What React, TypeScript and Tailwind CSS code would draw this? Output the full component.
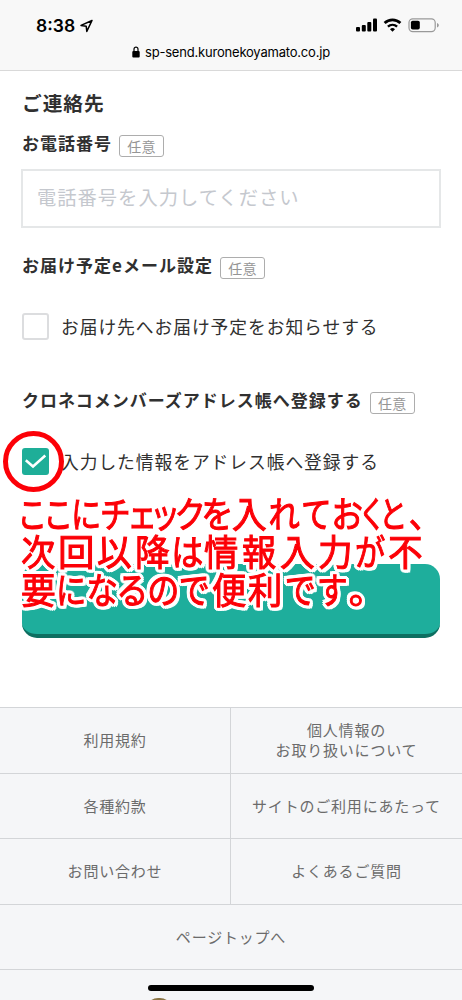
import React from "react";

type Glyph = [char: string, advance: number, stretch: number];

const NOTE_LINES: Glyph[][] = [
  [
    ["こ", 26, 0.82], ["こ", 27, 0.82], ["に", 28.5, 0.83], ["チ", 29.5, 0.84], ["ェ", 23.5, 0.82],
    ["ッ", 23, 0.83], ["ク", 27, 0.86], ["を", 28, 0.88], ["入", 36, 0.95], ["れ", 33.5, 0.86],
    ["て", 30.5, 0.84], ["お", 31.5, 0.87], ["く", 18, 0.75], ["と", 25, 0.78], ["、", 38, 0.9],
  ],
  [
    ["次", 38, 0.94], ["回", 38.5, 1], ["以", 37.5, 0.95], ["降", 37.5, 0.95], ["は", 33, 0.88], ["情", 36, 0.94],
    ["報", 38.5, 0.94], ["入", 39, 0.95], ["力", 36.5, 0.95], ["が", 33, 0.83], ["不", 37.5, 0.95],
  ],
  [
    ["要", 37.5, 0.95], ["に", 29.5, 0.83], ["な", 32, 0.86], ["る", 29, 0.88], ["の", 31.5, 0.88], ["で", 32, 0.85],
    ["便", 37, 0.94], ["利", 36, 0.94], ["で", 33, 0.85], ["す", 31.5, 0.84], ["。", 38, 1],
  ],
];

function NoteLine({ glyphs }: { glyphs: Glyph[] }) {
  return (
    <div className="flex h-[38px]">
      {glyphs.map(([char, advance, stretch], i) => (
        <span key={i} className="flex shrink-0 justify-center" style={{ width: advance }}>
          <span className="block shrink-0" style={{ transform: `scaleX(${stretch})` }}>{char}</span>
        </span>
      ))}
    </div>
  );
}

function StatusIcons() {
  return (
    <svg className="h-[18px] w-[86px]" viewBox="0 0 86 18" fill="none">
      <g fill="#000">
        <rect x="0" y="11" width="4" height="4.6" rx="1" />
        <rect x="5.8" y="9" width="4" height="6.6" rx="1" />
        <rect x="11.3" y="6" width="4" height="9.6" rx="1" />
        <rect x="17" y="2.5" width="4" height="13.1" rx="1" />
      </g>
      <path d="M28.600 7a11.500 11.500 0 0 1 15.800 0" stroke="#000" strokeWidth="2.800" />
      <path d="M31.900 10.600a6.900 6.900 0 0 1 9.200 0" stroke="#000" strokeWidth="2.400" />
      <path d="M36.500 15.800l-2.500-2.600a3.800 3.800 0 0 1 5 0z" fill="#000" />
      <rect x="53" y="2.800" width="26.200" height="12.800" rx="3.800" stroke="#999" strokeWidth="1.200" />
      <rect x="54.900" y="4.800" width="8.900" height="8.800" rx="1.800" fill="#000" />
      <path d="M81 7v4.400c1.300-.4 1.800-1.300 1.800-2.200S82.300 7.400 81 7z" fill="#999" />
    </svg>
  );
}

function Badge() {
  return (
    <span className="ml-[7px] mt-[3px] flex h-[22px] w-[45px] shrink-0 items-center justify-center rounded-[3px] border-[1.5px] border-[#adadad] pb-px text-[14px] leading-none tracking-[0.2px] text-[#959595]">
      任意
    </span>
  );
}

function FieldTitle({ children }: { children: React.ReactNode }) {
  return (
    <div className="flex h-[25px] items-start">
      <h3 className="whitespace-nowrap text-[17px] font-bold leading-[22px] tracking-[1px]">{children}</h3>
      <Badge />
    </div>
  );
}

function FooterCell({ children, divider }: { children: React.ReactNode; divider?: boolean }) {
  return (
    <a
      className={
        divider
          ? "flex h-[65.5px] items-center justify-center whitespace-nowrap border-b border-r border-[#d3d5d8] text-center"
          : "flex h-[65.5px] items-center justify-center whitespace-nowrap border-b border-[#d3d5d8] text-center"
      }
    >
      {children}
    </a>
  );
}

export default function App() {
  return (
    <div className="relative flex h-[1000px] w-[462px] flex-col overflow-hidden bg-white font-['Noto_Sans_CJK_JP',sans-serif] text-[#303030]">
      <header className="h-[71px] shrink-0 border-b border-[#d9d9d9] bg-[#f8f8f8] font-['Inter','Liberation_Sans',sans-serif] text-black">
        <div className="flex h-[40px] items-start justify-between pl-9 pr-5 pt-4">
          <div className="flex items-center gap-[5px]">
            <span className="text-[17.500px] font-semibold leading-[20px]">8:38</span>
            <svg className="h-[14px] w-[14px]" viewBox="0 0 14 14" fill="none" stroke="#000" strokeWidth="1.500" strokeLinejoin="round">
              <path d="M12 1.500L1 6.400l5.200.8.600 5.200z" />
            </svg>
          </div>
          <StatusIcons />
        </div>
        <div className="flex items-center pl-[132px] pt-[3px]">
          <svg className="mr-[5px] h-[12px] w-[8px]" viewBox="0 0 8 12">
            <path d="M2 6V3.200a2 2 0 0 1 4 0V6" fill="none" stroke="#000" strokeWidth="1.200" />
            <rect x="0.300" y="5" width="7.400" height="6.500" rx="1" />
          </svg>
          <span className="whitespace-nowrap text-[13px] leading-[18px] tracking-[-0.200px]">sp-send.kuronekoyamato.co.jp</span>
        </div>
      </header>

      <main className="flex h-[636px] shrink-0 flex-col px-[22px] pt-[19px]">
        <h2 className="h-[42px] text-[19.700px] font-bold leading-[26px] tracking-[1px]">ご連絡先</h2>
        <FieldTitle>お電話番号</FieldTitle>
        <div className="-ml-px mt-3 flex h-[59px] w-[420px] items-center border-2 border-[#e5e7e8] pb-[2px] pl-[14px] text-[19.300px] tracking-[1px] text-[#c5c8ce]">
          電話番号を入力してください
        </div>
        <div className="mt-[26px]">
          <FieldTitle>お届け予定eメール設定</FieldTitle>
        </div>
        <label className="mt-[34px] flex h-[26px] items-center">
          <span className="h-[27px] w-[27px] shrink-0 rounded-[3px] border-2 border-[#dcdddf]" />
          <span className="ml-3 whitespace-nowrap text-[17.800px] leading-[26px] tracking-[0.920px]">お届け先へお届け予定をお知らせする</span>
        </label>
        <div className="mt-[50px]">
          <FieldTitle>クロネコメンバーズアドレス帳へ登録する</FieldTitle>
        </div>
        <label className="relative mt-[34px] flex h-[26px] items-center">
          <span className="flex h-[27px] w-[27px] shrink-0 items-center justify-center rounded-[3px] bg-[#1eae98]">
            <svg className="h-[27px] w-[27px]" viewBox="0 0 27 27" fill="none" stroke="#fff" strokeWidth="2.500">
              <path d="M3.800 12.200l7.200 6.300L23.300 7.500" />
            </svg>
          </span>
          <span className="ml-3 whitespace-nowrap text-[17.800px] leading-[26px] tracking-[0.920px]">入力した情報をアドレス帳へ登録する</span>
          <span className="absolute -left-[19px] -top-[17px] h-[61px] w-[61px] rounded-full border-[5px] border-[#fc0007]" />
        </label>
        <button className="mt-[90px] h-[74px] w-[418px] shrink-0 rounded-[15px] border-b-4 border-[#0e6f61] bg-[#1eae9c]" />
      </main>

      <footer className="grow border-t border-[#d3d5d8] bg-[#f5f6f8] text-[15px] leading-[20px] tracking-[0.800px] text-[#6b6b6b]">
        <nav className="-mt-px grid grid-cols-2 pt-px">
          <FooterCell divider>利用規約</FooterCell>
          <FooterCell>個人情報の<br />お取り扱いについて</FooterCell>
          <FooterCell divider>各種約款</FooterCell>
          <FooterCell>サイトのご利用にあたって</FooterCell>
          <FooterCell divider>お問い合わせ</FooterCell>
          <FooterCell>よくあるご質問</FooterCell>
        </nav>
        <FooterCell>ページトップへ</FooterCell>
      </footer>

      <div className="absolute left-[19px] top-[494px] whitespace-nowrap text-[36.500px] leading-[38px] text-[#fc0007] [-webkit-text-stroke:1px_#fc0007] [filter:drop-shadow(2px_0_0_white)_drop-shadow(-2px_0_0_white)_drop-shadow(0_2px_0_white)_drop-shadow(0_-2px_0_white)_drop-shadow(1px_1px_0_white)_drop-shadow(-1px_-1px_0_white)]">
        {NOTE_LINES.map((glyphs, i) => (
          <NoteLine key={i} glyphs={glyphs} />
        ))}
      </div>

      <div className="absolute left-[148px] top-[985px] h-[6px] w-[166px] rounded-full bg-black" />
      <div className="absolute left-[146px] top-[998px] h-[24px] w-[26px] rounded-full bg-[#8a7444]" />
    </div>
  );
}
